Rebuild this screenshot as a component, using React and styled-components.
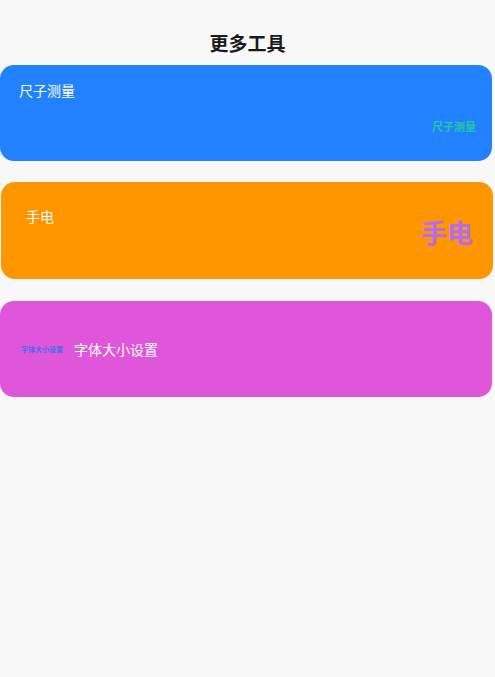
import styled, { createGlobalStyle } from "styled-components";

const Global = createGlobalStyle`
  body {
    margin: 0;
    background: #f8f8f8;
    font-family: "Noto Sans CJK SC", "Noto Sans", sans-serif;
  }
`;

const Page = styled.div`
  display: flex;
  flex-direction: column;
  min-height: 677px;
`;

const Title = styled.h1`
  margin: 28px 0 0;
  font-size: 19px;
  line-height: 30px;
  font-weight: 700;
  color: #1a1a1a;
  text-align: center;
`;

const Card = styled.div`
  width: 492px;
  height: ${(p) => p.$h || 96}px;
  margin: ${(p) => p.$mt}px 0 0 ${(p) => p.$ml || 0}px;
  box-sizing: border-box;
  border-radius: 14px;
  background: ${(p) => p.$bg};
  display: flex;
  flex-direction: ${(p) => (p.$row ? "row" : "column")};
  align-items: ${(p) => (p.$row ? "center" : "stretch")};
  padding: ${(p) => p.$pad};
`;

const Label = styled.span`
  font-size: 14px;
  line-height: 20px;
  color: #ffffff;
`;

const Badge = styled.span`
  align-self: flex-end;
  margin-top: ${(p) => p.$mt}px;
  font-size: ${(p) => p.$size}px;
  line-height: ${(p) => p.$size + 4}px;
  font-weight: 700;
  color: ${(p) => p.$color};
`;

const Tiny = styled.span`
  font-size: 7px;
  font-weight: 700;
  color: #3b6ef0;
  margin-right: 11px;
  white-space: nowrap;
`;

export default function App() {
  return (
    <Page>
      <Global />
      <Title>更多工具</Title>
      <Card $bg="#2181ff" $mt={7} $pad="15px 16px 0 19px">
        <Label>尺子测量</Label>
        <Badge $mt={19} $size={11} $color="#22c9a0">
          尺子测量
        </Badge>
      </Card>
      <Card $bg="#ff9600" $mt={21} $ml={1} $h={97} $pad="24px 20px 0 25px">
        <Label>手电</Label>
        <Badge $mt={-9} $size={26} $color="#b36cf2">
          手电
        </Badge>
      </Card>
      <Card $bg="#e056da" $mt={22} $row $pad="0 0 0 21px">
        <Tiny>字体大小设置</Tiny>
        <Label>字体大小设置</Label>
      </Card>
    </Page>
  );
}
